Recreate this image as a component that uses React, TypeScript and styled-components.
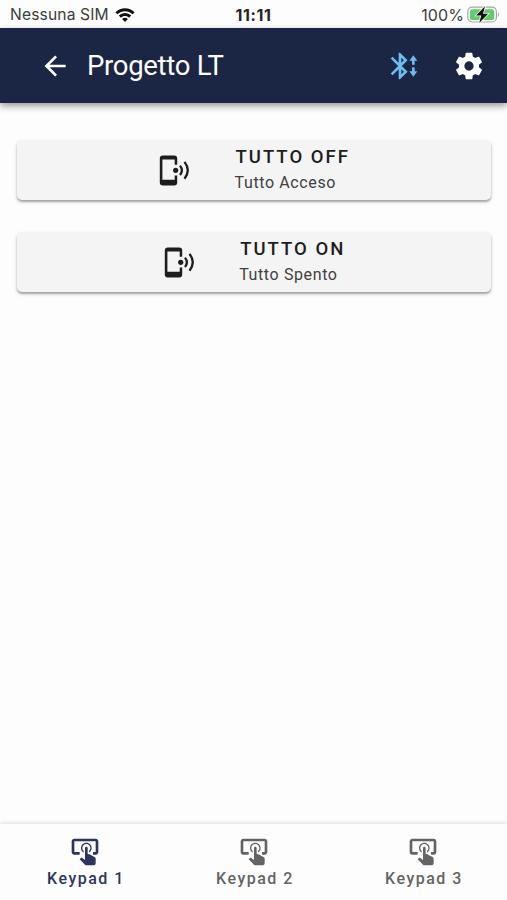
import React from "react";
import styled, { createGlobalStyle } from "styled-components";

const GlobalStyle = createGlobalStyle`
  * { box-sizing: border-box; }
  body { margin: 0; background: #fdfdfd; font-family: Roboto, sans-serif; }
`;

const Screen = styled.div`
  display: flex;
  flex-direction: column;
  width: 507px;
  height: 900px;
  overflow: hidden;
  background: #fdfdfd;
`;

const StatusBar = styled.div`
  display: grid;
  grid-template-columns: 1fr auto 1fr;
  align-items: center;
  height: 28px;
  flex: none;
  padding: 2px 7px 0 10px;
  font-family: Inter, sans-serif;
  font-size: 16px;
  line-height: 20px;
  color: #3c3c3c;
`;

const StatusGroup = styled.div<{ $end?: boolean }>`
  display: flex;
  align-items: center;
  gap: ${(p) => (p.$end ? 3 : 6)}px;
  justify-content: ${(p) => (p.$end ? "flex-end" : "flex-start")};
`;

const Carrier = styled.span`
  font-size: 15.6px;
  letter-spacing: 0.15px;
`;

const Percent = styled.span`
  font-size: 16px;
  letter-spacing: 0.1px;
`;

const Clock = styled.span`
  margin-right: 3px;
  font-size: 16px;
  font-weight: 650;
  color: #242424;
  letter-spacing: 0.6px;
`;

const AppBar = styled.header`
  display: flex;
  align-items: center;
  height: 75px;
  flex: none;
  padding: 0 22px 0 39px;
  background: #1b2544;
  color: #fff;
  box-shadow: 0 3px 7px rgba(0, 0, 0, 0.4);
`;

const Title = styled.h1`
  flex: 1;
  margin: 1px 0 0 16px;
  font-size: 27.5px;
  line-height: 34px;
  font-weight: 400;
  letter-spacing: -0.3px;
`;

const Actions = styled.div`
  display: flex;
  gap: 33px;
`;

const Icon = styled.svg<{ $color?: string }>`
  display: block;
  flex: none;
  fill: ${(p) => p.$color ?? "currentColor"};
`;

const Content = styled.main`
  flex: 1;
  display: flex;
  flex-direction: column;
  gap: 32px;
  padding: 37px 16px 0 17px;
`;

const CommandButton = styled.button`
  display: flex;
  align-items: center;
  justify-content: center;
  gap: 43.5px;
  height: 60px;
  padding: 0;
  border: 0;
  border-radius: 5px;
  background: #f4f4f4;
  color: #1d1d1d;
  font-family: inherit;
  text-align: left;
  box-shadow: 0 2px 2px rgba(0, 0, 0, 0.26), 0 2px 4px rgba(0, 0, 0, 0.14);
`;

const Labels = styled.span`
  display: flex;
  flex-direction: column;
  padding-bottom: 2px;
`;

const Name = styled.span`
  padding-left: 1px;
  font-size: 18.5px;
  line-height: 26px;
  font-weight: 500;
  letter-spacing: 2.02px;
`;

const Description = styled.span`
  font-size: 16px;
  line-height: 25px;
  letter-spacing: 0.62px;
  color: #404040;
`;

const BottomNav = styled.nav`
  display: grid;
  grid-template-columns: repeat(3, 1fr);
  height: 76px;
  flex: none;
  background: #fdfdfd;
  box-shadow: 0 -1px 4px rgba(0, 0, 0, 0.13);
`;

const NavItem = styled.a<{ $active?: boolean }>`
  display: flex;
  flex-direction: column;
  align-items: center;
  padding-top: 12px;
  color: ${(p) => (p.$active ? "#2b3560" : "#646464")};
`;

const NavLabel = styled.span`
  font-size: 16px;
  line-height: 20px;
  font-weight: 500;
  letter-spacing: 1.5px;
  margin: 1px 0 0 3px;
`;

const ArrowIcon = () => (
  <Icon width="32" height="32" viewBox="0 0 24 24">
    <path d="M20 11v2H8l5.5 5.5-1.42 1.42L4.16 12l7.92-7.92L13.5 5.5 8 11h12z" />
  </Icon>
);

const BluetoothIcon = () => (
  <Icon $color="#6bbcf0" width="32" height="32" viewBox="0 0 24 24">
    <path d="M14.71 7.71 10.41 12l4.3 4.29L9 22H8v-7.59L3.41 19 2 17.59 7.59 12 2 6.41 3.41 5 8 9.59V2h1l5.71 5.71M10 5.83v3.76l1.88-1.88L10 5.83m1.88 10.46L10 14.41v3.76l1.88-1.88M22 8h-2v3h-2V8h-2l3-4 3 4m0 8-3 4-3-4h2v-3h2v3h2z" />
  </Icon>
);

const GearIcon = () => (
  <Icon width="32" height="32" viewBox="0 0 24 24">
    <path d="M12 15.5A3.5 3.5 0 0 1 8.5 12 3.5 3.5 0 0 1 12 8.5a3.5 3.5 0 0 1 3.5 3.5 3.5 3.5 0 0 1-3.5 3.5m7.43-2.53c.04-.32.07-.64.07-.97s-.03-.66-.07-1l2.11-1.63c.19-.15.24-.42.12-.64l-2-3.46c-.12-.22-.39-.31-.61-.22l-2.49 1c-.52-.39-1.06-.73-1.69-.98l-.37-2.65A.506.506 0 0 0 14 2h-4c-.25 0-.46.18-.5.42l-.37 2.65c-.63.25-1.17.59-1.69.98l-2.49-1c-.22-.09-.49 0-.61.22l-2 3.46c-.13.22-.07.49.12.64L4.57 11c-.04.34-.07.67-.07 1s.03.65.07.97l-2.11 1.66c-.19.15-.25.42-.12.64l2 3.46c.12.22.39.3.61.22l2.49-1.01c.52.4 1.06.74 1.69.99l.37 2.65c.04.24.25.42.5.42h4c.25 0 .46-.18.5-.42l.37-2.65c.63-.26 1.17-.59 1.69-.99l2.49 1.01c.22.08.49 0 .61-.22l2-3.46c.12-.22.07-.49-.12-.64l-2.11-1.66z" />
  </Icon>
);

const PhoneIcon = () => (
  <Icon width="33" height="32" viewBox="0 0 33 32">
    <path d="M4.8 1.5h11.4q3 0 3 3v6.3h-2.5V5.6H4.4v20.2h12.3v-4.4h2.5V28.500q0 3-3 3H4.800q-3 0-3-3V4.500q0-3 3-3z" />
    <circle cx="17.7" cy="16.300" r="2.6" />
    <path
      d="M22 11.600q3.800 4.700 0 9.400M26.500 7.900q6.600 8.400 0 16.800"
      fill="none"
      stroke="currentColor"
      strokeWidth="2.3"
    />
  </Icon>
);

const TapIcon = () => (
  <Icon width="32" height="32" viewBox="0 0 24 24">
    <path d="M13 5c2.21 0 4 1.79 4 4 0 1.5-.8 2.77-2 3.46v-1.22c.61-.55 1-1.35 1-2.24 0-1.66-1.34-3-3-3s-3 1.34-3 3c0 .89.39 1.69 1 2.24v1.22C9.8 11.77 9 10.5 9 9c0-2.21 1.79-4 4-4m7 15.5c-.03.82-.68 1.47-1.5 1.5H13c-.38 0-.74-.15-1-.43l-4-4.2.74-.77c.19-.21.46-.32.76-.32h.2L12 18V9c0-.55.45-1 1-1s1 .45 1 1v4.47l1.21.13 3.94 2.19c.53.24.85.77.85 1.35v3.36M20 2H4c-1.1 0-2 .9-2 2v8c0 1.11.9 2 2 2h4v-2H4V4h16v8h-2v2h2c1.11 0 2-.89 2-2V4c0-1.1-.89-2-2-2z" />
  </Icon>
);

const WifiIcon = () => (
  <Icon $color="#111" width="20" height="16" viewBox="0 0 20 16">
    <path d="M.4 5.2C5.8-.2 14.2-.2 19.6 5.2L17.5 7.3C13.3 3.1 6.7 3.1 2.5 7.3zM3.8 8.6c3.5-3.4 8.9-3.4 12.4 0l-2.1 2.1c-2.4-2.2-5.8-2.2-8.2 0zM7.1 11.9c1.7-1.5 4.1-1.5 5.8 0L10 14.9z" />
  </Icon>
);

const BatteryIcon = () => (
  <Icon width="33" height="20" viewBox="0 0 33 20">
    <rect x=".8" y="2.2" width="28.6" height="14.8" rx="4.5" fill="#fff" stroke="#a5a5a5" strokeWidth="1.2" />
    <rect x="2.9" y="4.3" width="24.4" height="10.6" rx="2.5" fill="#62cc6c" />
    <path d="M30.9 7.3q2.2 2.4 0 4.8z" fill="#a5a5a5" />
    <path d="M18 1.300 9 10.400h5.200l-2 7.500 9-9.100h-5.200z" fill="#111" stroke="#fff" strokeWidth="1.5" paintOrder="stroke" />
  </Icon>
);

const commands = [
  { name: "TUTTO OFF", description: "Tutto Acceso" },
  { name: "TUTTO ON", description: "Tutto Spento" },
];

const keypads = ["Keypad 1", "Keypad 2", "Keypad 3"];

export default function App() {
  return (
    <>
      <GlobalStyle />
      <Screen>
        <StatusBar>
          <StatusGroup>
            <Carrier>Nessuna SIM</Carrier>
            <WifiIcon />
          </StatusGroup>
          <Clock>11:11</Clock>
          <StatusGroup $end>
            <Percent>100%</Percent>
            <BatteryIcon />
          </StatusGroup>
        </StatusBar>
        <AppBar>
          <ArrowIcon />
          <Title>Progetto LT</Title>
          <Actions>
            <BluetoothIcon />
            <GearIcon />
          </Actions>
        </AppBar>
        <Content>
          {commands.map((c) => (
            <CommandButton key={c.name}>
              <PhoneIcon />
              <Labels>
                <Name>{c.name}</Name>
                <Description>{c.description}</Description>
              </Labels>
            </CommandButton>
          ))}
        </Content>
        <BottomNav>
          {keypads.map((k, i) => (
            <NavItem key={k} $active={i === 0}>
              <TapIcon />
              <NavLabel>{k}</NavLabel>
            </NavItem>
          ))}
        </BottomNav>
      </Screen>
    </>
  );
}
